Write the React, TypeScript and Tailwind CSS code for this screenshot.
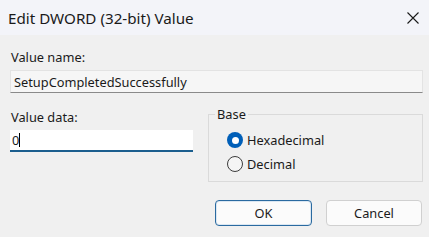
import React from "react";

function Radio({ checked, label }: { checked?: boolean; label: string }) {
  return (
    <div className="flex items-center h-[24px]">
      {checked ? (
        <span className="w-[16px] h-[16px] rounded-full bg-[#005fb8] flex items-center justify-center">
          <span className="w-[7px] h-[7px] rounded-full bg-white" />
        </span>
      ) : (
        <span className="w-[16px] h-[16px] rounded-full border border-[#3c3c3c] bg-[#f5f5f5]" />
      )}
      <span className="ml-[4px]">{label}</span>
    </div>
  );
}

export default function App() {
  return (
    <div
      className="w-[429px] h-[237px] bg-[#f0f0f0] text-[#1a1a1a] text-[12.8px] leading-[16px] flex flex-col overflow-hidden"
      style={{ fontFamily: '"Noto Sans", "Open Sans", sans-serif' }}
    >
      {/* title bar */}
      <div className="h-[35px] bg-[#f3f4f9] flex items-center justify-between pl-[8px] pr-[9px]">
        <span className="text-[15.2px]">Edit DWORD (32-bit) Value</span>
        <svg width="12" height="12" viewBox="0 0 12 12" className="mr-[1px]">
          <path d="M0.5 0.5 L11.5 11.5 M11.5 0.5 L0.5 11.5" stroke="#1a1a1a" strokeWidth="1.1" fill="none" />
        </svg>
      </div>

      <div className="flex flex-col pl-[10px] pr-[6px] pt-[14px]">
        <div className="pl-[1px]">Value name:</div>
        <div className="mt-[5px] h-[23px] bg-[#f6f6f6] border border-[#e3e3e3] border-b-[#8a8a8a] flex items-center pl-[3px]">
          SetupCompletedSuccessfully
        </div>

        <div className="flex mt-[16px]">
          <div className="w-[183px] flex flex-col">
            <div className="pl-[1px]">Value data:</div>
            <div className="mt-[5px] h-[22px] bg-white border-b-2 border-[#1b5e8e] flex items-center pl-[2px]">
              <span>0</span>
              <span className="w-px h-[14px] bg-black" />
            </div>
          </div>
          <fieldset className="ml-[15px] mt-[-3px] w-[215px] h-[76px] border border-[#dadada] px-0">
            <legend className="ml-[6px] px-[2px]">Base</legend>
            <div className="flex flex-col mt-[6px] pl-[18px]">
              <Radio checked label="Hexadecimal" />
              <Radio label="Decimal" />
            </div>
          </fieldset>
        </div>

        <div className="flex justify-end gap-[14px] mt-[18px] pr-[1px]">
          <button className="w-[97px] h-[26px] rounded-[4px] bg-[#fbfbfb] border border-[#2a6aa0] shadow-[inset_0_0_0_1px_#dbe7f2]">
            OK
          </button>
          <button className="w-[96px] h-[26px] rounded-[4px] bg-[#fbfbfb] border border-[#d0d0d0]">
            Cancel
          </button>
        </div>
      </div>
    </div>
  );
}
